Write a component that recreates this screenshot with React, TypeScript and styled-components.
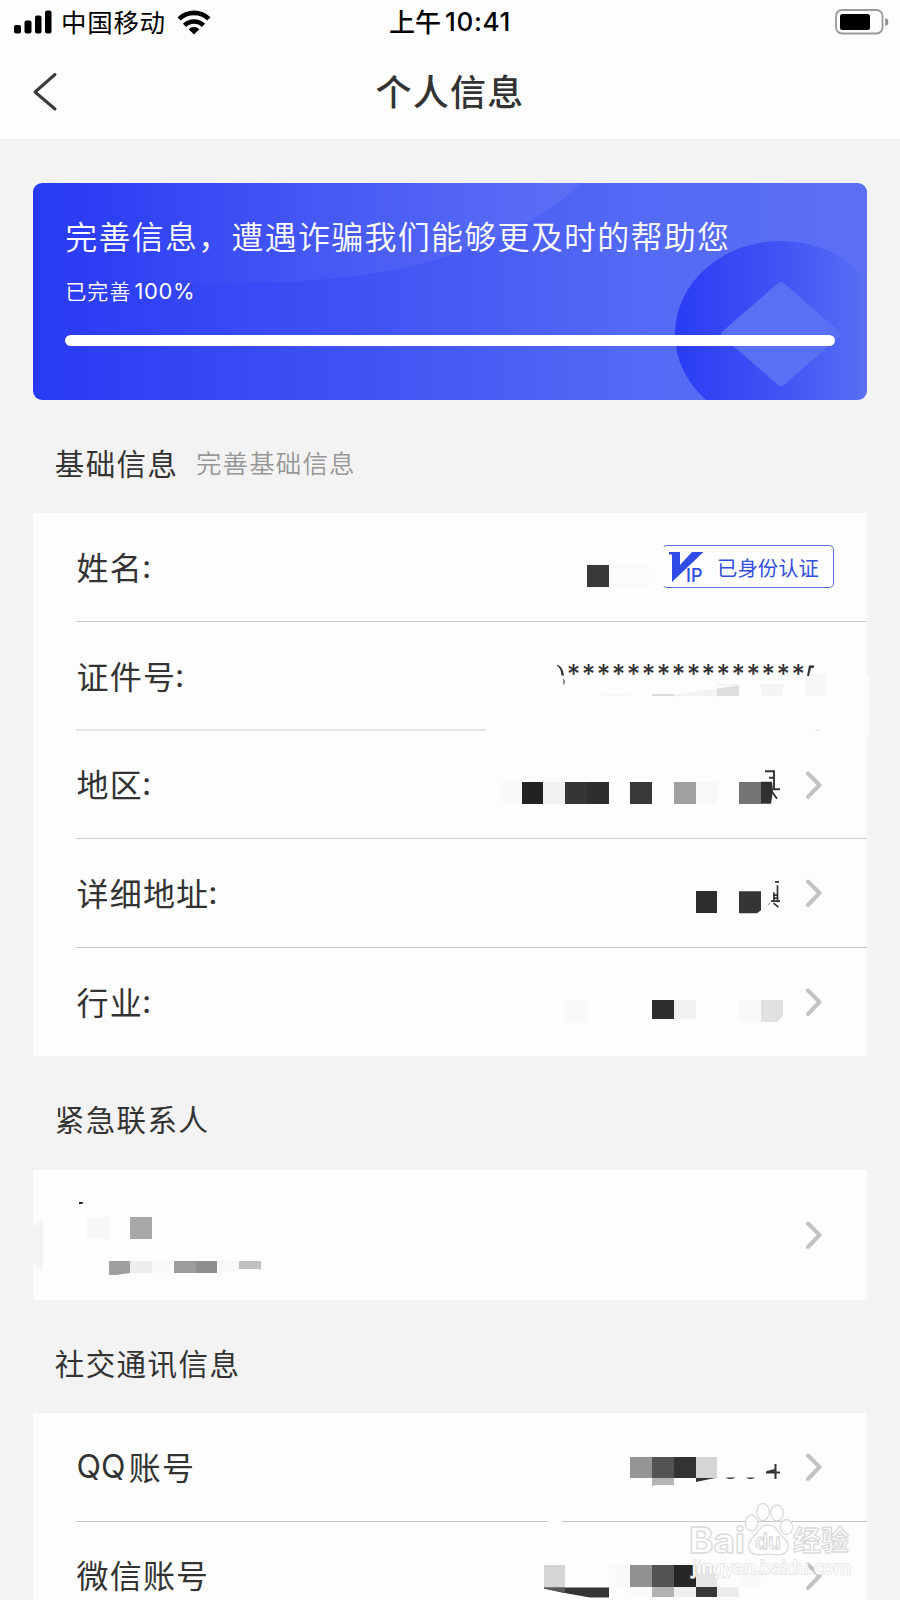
import React from "react";
import styled, { createGlobalStyle } from "styled-components";

const GlobalStyle = createGlobalStyle`
  * { box-sizing: border-box; }
  body {
    margin: 0;
    background: #f3f3f3;
    font-family: "Noto Sans CJK SC", "Noto Sans", sans-serif;
    color: #333;
  }
`;

const Screen = styled.div`
  position: relative;
  width: 900px;
  height: 1600px;
  overflow: hidden;
  background: #f3f3f3;
`;

const Header = styled.header`
  height: 139px;
  background: #fdfdfd;
`;

const StatusBar = styled.div`
  display: grid;
  grid-template-columns: 1fr auto 1fr;
  align-items: center;
  height: 46px;
  padding: 0 11px 0 14px;
  color: #000;
`;

const Carrier = styled.div`
  display: flex;
  align-items: center;
  font-size: 25.5px;
  line-height: 44px;
  letter-spacing: 0.7px;
  & > span { margin: -4px 11px 0 9px; }
  & > svg:last-child { margin-top: -3px; }
  & > svg:first-child { margin-top: -2px; }
`;

const Clock = styled.div`
  display: flex;
  align-items: center;
  margin: -4px 0 0 -3px;
  font-size: 26px;
  font-weight: 500;
  line-height: 44px;
`;

const Digits = styled.span<{ $size: number; $weight?: number; $gap?: number; $track?: number; $drop?: number }>`
  font-family: Inter, sans-serif;
  font-size: ${(p) => p.$size}px;
  font-weight: ${(p) => p.$weight ?? 400};
  margin-left: ${(p) => p.$gap ?? 0}px;
  padding-top: ${(p) => p.$drop ?? 0}px;
  letter-spacing: ${(p) => p.$track ?? 0}px;
`;

const Battery = styled.svg`
  justify-self: end;
  margin-top: -3px;
`;

const NavBar = styled.div`
  display: grid;
  grid-template-columns: 60px 1fr 60px;
  align-items: center;
  height: 92px;
`;

const BackIcon = styled.svg`
  margin-left: 30px;
`;

const Title = styled.h1`
  margin: -4px 0 0;
  text-align: center;
  font-size: 36px;
  font-weight: 500;
  line-height: 52px;
  letter-spacing: 1.2px;
`;

const Main = styled.main`
  padding: 44px 33px 0 32.7px;
`;

const Banner = styled.section`
  position: relative;
  height: 217px;
  padding: 29px 32px 0;
  border-radius: 9px;
  overflow: hidden;
  background: linear-gradient(90deg, #293af5 0%, #4456f3 45%, #5469f5 72%, #5b70f4 100%);
  color: #fff;
`;

const BannerArt = styled.svg`
  position: absolute;
  inset: 0;
`;

const BannerTitle = styled.h2`
  position: relative;
  margin: 0 0 0 0.5px;
  font-size: 32px;
  font-weight: 350;
  line-height: 46px;
  letter-spacing: 1.25px;
  white-space: nowrap;
`;

const BannerStatus = styled.div`
  position: relative;
  display: flex;
  align-items: center;
  height: 32px;
  margin: 16px 0 0 0.5px;
  font-size: 21px;
  font-weight: 350;
  letter-spacing: 1.1px;
`;

const Track = styled.div`
  position: relative;
  height: 11px;
  margin-top: 28.5px;
  border-radius: 6px;
  background: rgba(255, 255, 255, 0.3);
  overflow: hidden;
`;

const Fill = styled.div`
  height: 100%;
  border-radius: 6px;
  background: #fff;
`;

const Heading = styled.div<{ $height: number; $shift?: number }>`
  display: flex;
  align-items: center;
  height: ${(p) => p.$height}px;
  padding: ${(p) => p.$shift ?? 0}px 0 0 22px;
  font-size: 29.5px;
  letter-spacing: 1.45px;
  white-space: nowrap;
`;

const Hint = styled.span`
  margin-left: 17.5px;
  font-size: 25.5px;
  font-weight: 350;
  letter-spacing: 1.1px;
  color: #979797;
`;

const Card = styled.section`
  background: #fdfdfd;
`;

const Line = styled.div<{ $height?: number; $rule?: string }>`
  display: flex;
  align-items: center;
  height: ${(p) => p.$height ?? 108.7}px;
  margin-left: 43.3px;
  padding-right: 45px;
  box-shadow: ${(p) => (p.$rule ? `inset 0 -1px ${p.$rule}` : "none")};
`;

const Label = styled.span`
  display: flex;
  align-items: center;
  margin: -3px 0 0 0.5px;
  font-size: 32px;
  line-height: 46px;
  letter-spacing: 1.2px;
  white-space: nowrap;
  & > i { margin: 2px 0 0 -1px; font-style: normal; font-family: Inter, sans-serif; }
`;

const Value = styled.div`
  display: grid;
  align-items: center;
  justify-items: end;
  height: 100%;
  margin-left: auto;
  & > * { grid-area: 1 / 1; }
`;

const Mosaic = styled.svg`
  display: block;
  overflow: visible;
  align-self: start;
`;

const Stars = styled.span`
  margin: -5px 15.5px 0 0;
  font-family: Inter, sans-serif;
  font-size: 26px;
  font-weight: 500;
  line-height: 32px;
  letter-spacing: 1.45px;
`;

const Verified = styled.div`
  display: flex;
  align-items: center;
  gap: 13.5px;
  width: 172.5px;
  height: 43px;
  margin: -1px -12px 0 12px;
  padding-left: 6px;
  border: 1.4px solid #5870d8;
  border-left-color: transparent;
  border-radius: 5px;
  color: #3350dd;
  font-size: 20.4px;
  white-space: nowrap;
  & > svg { overflow: visible; }
  & > span { margin-top: 1px; }
`;

const Watermark = styled.svg`
  position: absolute;
  left: 685px;
  top: 1498px;
`;

type Tile = [x: number, y: number, w: number, h: number, color: string];

/* A redacted value; its tiles share one coordinate space with the screen. */
function Redacted({
  top, left = 480, width = 325, height = 108, tiles, children,
}: {
  top: number; left?: number; width?: number; height?: number; tiles: Tile[]; children?: React.ReactNode;
}) {
  return (
    <Mosaic width={width} height={height} viewBox={`${left} ${top} ${width} ${height}`}>
      {tiles.map(([x, y, w, h, c], i) => (
        <rect key={i} x={x} y={y} width={w} height={h} fill={c} shapeRendering="crispEdges" />
      ))}
      {children}
    </Mosaic>
  );
}

const Chevron = () => (
  <svg width="17" height="30" viewBox="0 0 17 30" fill="none">
    <path d="M3 3.500l11.500 11.500L3 27" stroke="#c3c3c3" strokeWidth="4" strokeLinecap="round" strokeLinejoin="round" />
  </svg>
);

function VipIcon() {
  return (
    <svg width="35" height="34" viewBox="0 0 35 34">
      <path d="M0 2h11v13L23 2h11.500L3 32V4.500H0z" fill="#304ce6" />
      <text x="17" y="31.500" fontFamily="Inter, sans-serif" fontWeight="500" fontSize="18" fill="#304ce6">IP</text>
    </svg>
  );
}

export default function App() {
  return (
    <Screen>
      <GlobalStyle />
      <Header>
        <StatusBar>
          <Carrier>
            <svg width="38" height="24" viewBox="0 0 38 24">
              <rect x="0" y="15" width="7" height="8.5" rx="2" />
              <rect x="10.5" y="10.5" width="7" height="13" rx="2" />
              <rect x="21" y="5.5" width="6.5" height="18" rx="2" />
              <rect x="31" y="0.5" width="6.5" height="23" rx="2" />
            </svg>
            <span>中国移动</span>
            <svg width="34" height="26" viewBox="0 0 34 26" fill="none" stroke="#000" strokeWidth="4.6">
              <path d="M2.1 9.900a21.500 21.500 0 0 1 29.800 0" />
              <path d="M7.500 16.400a13.500 13.500 0 0 1 19 0" />
              <path d="M17 25.500l-5.300-5.300a7.700 7.700 0 0 1 10.600 0z" fill="#000" stroke="none" />
            </svg>
          </Carrier>
          <Clock>
            上午<Digits $size={26} $weight={540} $gap={4} $track={0.7} $drop={2}>10:41</Digits>
          </Clock>
          <Battery width="54" height="26" viewBox="0 0 54 26">
            <rect x="1" y="1" width="46.5" height="23.5" rx="6" fill="none" stroke="#9b9b9b" strokeWidth="1.8" />
            <rect x="5" y="5" width="30" height="16" rx="2.5" />
            <path d="M50.3 9q3 .7 3 4t-3 4z" fill="#8b8b8b" />
          </Battery>
        </StatusBar>
        <NavBar>
          <BackIcon width="30" height="40" viewBox="0 0 30 40" fill="none">
            <path d="M25 2.500L5 20l20 17" stroke="#3b3b3b" strokeWidth="3" strokeLinecap="round" strokeLinejoin="round" />
          </BackIcon>
          <Title>个人信息</Title>
        </NavBar>
      </Header>

      <Main>
        <Banner>
          <BannerArt width="835" height="217" viewBox="0 0 835 217">
            <defs>
              <linearGradient id="arc" x1="0" x2="1">
                <stop offset="0.15" stopColor="#6c80f8" stopOpacity="0" />
                <stop offset="1" stopColor="#6c80f8" stopOpacity="0.4" />
              </linearGradient>
              <linearGradient id="disc" x1="0" x2="1">
                <stop offset="0" stopColor="#2a3cf3" />
                <stop offset="0.5" stopColor="#4154f4" />
                <stop offset="0.93" stopColor="#5a70f4" />
              </linearGradient>
            </defs>
            <path d="M0 0h549C470 70 360 100 200 100H0z" fill="url(#arc)" />
            <ellipse cx="748" cy="151" rx="106" ry="93" fill="url(#disc)" />
            <path d="M744 101q4-4 8 0l54 47q4 3 0 6l-54 47q-4 4-8 0l-54-47q-4-3 0-6z" fill="#5a70f4" />
          </BannerArt>
          <BannerTitle>完善信息，遭遇诈骗我们能够更及时的帮助您</BannerTitle>
          <BannerStatus>
            已完善<Digits $size={22} $weight={380} $gap={3} $track={0.6} $drop={2}>100%</Digits>
          </BannerStatus>
          <Track><Fill style={{ width: "100%" }} /></Track>
        </Banner>

        <Heading $height={113} $shift={10}>基础信息<Hint>完善基础信息</Hint></Heading>
        <Card>
          <Line $rule="#c9c9c9">
            <Label>姓名<i>:</i></Label>
            <Value>
              <Redacted top={513} width={342} tiles={[[587, 565, 22, 22, "#383838"], [609, 565, 42, 22, "#fbfbfb"]]} />
              <Verified>
                <VipIcon />
                <span>已身份认证</span>
              </Verified>
            </Value>
          </Line>
          <Line>
            <Label>证件号<i>:</i></Label>
            <Value>
              <Stars>****************</Stars>
              <Redacted
                top={621.6}
                width={342}
                tiles={[
                  [717, 684, 22, 12, "#dedede"], [695, 688, 22, 8, "#f3f3f3"], [652, 693.5, 22, 2.5, "#dcdcdc"],
                  [602, 694, 27, 2, "#f8f8f8"], [761, 684, 22, 12, "#f5f5f5"], [805, 674, 21, 22, "#f7f7f7"],
                ]}
              >
                <path d="M674 696v-2l43-6v8z" fill="#f3f3f3" />
                <path d="M695 684h44v1l-22 3-22 3z" fill="#fdfdfd" />
                <path d="M864 673l5 2v60l-5 2z" fill="#fdfdfd" />
                <path d="M557 664q6 2 7 11h-2.500q-.5-7-4.500-10zM563.500 678q2.500 3 0 7zM809 665h5.500l-1 2.500h-2.500l-2 8h-2z" fill="#333" />
                <path d="M76 729.700h410" stroke="#dcdcdc" strokeWidth="1.500" />
                <path d="M815 729.500h4" stroke="#ddd" />
              </Redacted>
            </Value>
          </Line>
          <Line $rule="#d0d0d0">
            <Label>地区<i>:</i></Label>
            <Value>
              <Redacted
                top={730.2}
                tiles={[
                  [500, 782, 22, 22, "#fafafa"], [522, 782, 21, 22, "#222222"], [543, 782, 22, 22, "#f1f1f1"],
                  [565, 782, 22, 22, "#353535"], [587, 782, 22, 22, "#2e2e2e"], [630, 782, 22, 22, "#383838"],
                  [674, 782, 22, 22, "#a0a0a0"], [696, 782, 21, 22, "#f8f8f8"], [739, 782, 22, 22, "#747474"],
                ]}
              >
                <path d="M761 782h11l1 9-2 13h-10z" fill="#303030" />
                <path d="M765 771.500h9v19M769 778h5M773 789.500h7M772 792l5 7" fill="none" stroke="#333" strokeWidth="1.900" />
              </Redacted>
            </Value>
            <Chevron />
          </Line>
          <Line $rule="#c4c4c4">
            <Label>详细地址<i>:</i></Label>
            <Value>
              <Redacted top={838.8} tiles={[[696, 891, 21, 22, "#2c2c2c"]]}>
                <path d="M739 891h22v19l-4 3h-18z" fill="#353535" />
                <path d="M775 881.700h4M777.500 885v17M774 892v9M771 901h9M773.500 903l5 4M773 895h4M773 898h4" fill="none" stroke="#333" strokeWidth="1.700" />
                <path d="M768 905l2-3" stroke="#999" />
              </Redacted>
            </Value>
            <Chevron />
          </Line>
          <Line>
            <Label>行业<i>:</i></Label>
            <Value>
              <Redacted
                top={947.9}
                tiles={[
                  [565, 1000, 22, 22, "#f9f9f9"], [652, 1000, 22, 19, "#2e2e2e"],
                  [674, 1000, 22, 19, "#f2f2f2"], [739, 1000, 22, 22, "#f9f9f9"],
                ]}
              >
                <path d="M761 1000h22v16l-6 6h-16z" fill="#e1e1e1" />
              </Redacted>
            </Value>
            <Chevron />
          </Line>
        </Card>

        <Heading $height={113.5} $shift={10}>紧急联系人</Heading>
        <Card>
          <Line $height={130}>
            <Redacted
              top={1170}
              left={76}
              width={200}
              height={130}
              tiles={[
                [87, 1217, 22, 22, "#f7f7f7"], [130, 1217, 22, 22, "#a8a8a8"], [130, 1261, 22, 12, "#eeeeee"],
                [152, 1261, 22, 12, "#fafafa"], [174, 1261, 22, 12, "#9c9c9c"], [196, 1261, 21, 12, "#8f8f8f"],
                [217, 1261, 22, 11, "#f8f8f8"],
              ]}
            >
              <path d="M109 1261h21v12l-14 2h-7z" fill="#9f9f9f" />
              <path d="M79 1204v-2h4.500l-1.500 2z" fill="#222" />
              <path d="M239 1261h22v9l-3-1h-19z" fill="#c0c0c0" />
              <path d="M32 1228l11-10v54l-11-10z" fill="#f4f4f4" />
            </Redacted>
            <Value />
            <Chevron />
          </Line>
        </Card>

        <Heading $height={113} $shift={11}>社交通讯信息</Heading>
        <Card>
          <Line $rule="#c4c4c4">
            <Label><Digits $size={32} $track={0.1} $drop={2}>QQ</Digits><span>&#8202;账号</span></Label>
            <Value>
              <Redacted
                top={1413}
                tiles={[
                  [630, 1457, 22, 21, "#959595"], [652, 1457, 22, 21, "#535353"], [674, 1457, 22, 21, "#333333"],
                  [696, 1457, 21, 21, "#d5d5d5"],
                ]}
              >
                <path d="M652 1478h22v7h-18l-4 1z" fill="#b5b5b5" />
                <path d="M696 1478h20l-6 1-14 3zM725.500 1477.500h10q-5 3-10 0zM746 1477.500h9q-4.500 3-9 0z" fill="#333" />
                <path d="M766 1472.500h14M775.500 1464v15M767 1472l8-2" fill="none" stroke="#333" strokeWidth="2" />
                <path d="M548 1521.200h14" stroke="#fdfdfd" strokeWidth="4" />
              </Redacted>
            </Value>
            <Chevron />
          </Line>
          <Line>
            <Label>微信账号</Label>
            <Value>
              <Redacted
                top={1521.6}
                tiles={[
                  [544, 1565, 21, 22, "#d5d5d5"], [609, 1565, 21, 22, "#fafafa"], [630, 1565, 22, 22, "#919191"],
                  [652, 1565, 22, 22, "#535353"], [674, 1565, 22, 22, "#272727"], [696, 1565, 21, 22, "#e5e5e5"],
                  [739, 1565, 22, 22, "#fafafa"], [630, 1587, 22, 10, "#fafafa"], [652, 1587, 22, 10, "#b2b2b2"],
                  [674, 1587, 22, 10, "#eeeeee"], [696, 1587, 21, 10, "#383838"], [717, 1587, 22, 10, "#ececec"],
                ]}
              >
                <path d="M544 1587h65v10h-19l-28-5-18-4z" fill="#343434" />
                <path d="M544 1587h21v5.500l-21-4.500z" fill="#595959" />
              </Redacted>
            </Value>
            <Chevron />
          </Line>
        </Card>
      </Main>

      <Watermark width="175" height="90" viewBox="685 1498 175 90">
        <g fill="#fff" fillOpacity="0.85" stroke="#dadada" strokeWidth="1.300" strokeLinejoin="round">
          <text x="689" y="1553" fontSize="35" fontFamily="Inter, sans-serif" fontWeight="700" textLength="56" lengthAdjust="spacingAndGlyphs">Bai</text>
          <ellipse cx="751.500" cy="1523" rx="6.200" ry="8" />
          <ellipse cx="763" cy="1512" rx="6.200" ry="8.500" />
          <ellipse cx="777" cy="1513" rx="6.200" ry="8" />
          <ellipse cx="786.500" cy="1527" rx="6" ry="7.500" />
          <path d="M768 1525c-8 0-9 7-14 11-5 5-6 8-5 12 2 8 9 7 19 6 10 1 18 2 20-6 1-5-1-8-6-12-5-5-6-11-14-11z" />
          <text x="755" y="1549" fontSize="22" fontWeight="600" fontFamily="Inter, sans-serif" textLength="26" lengthAdjust="spacingAndGlyphs">du</text>
          <text x="793" y="1551" fontSize="28" fontWeight="700" fontFamily="'Noto Sans CJK SC', sans-serif" textLength="56">经验</text>
        </g>
        <text
          x="692" y="1574" fontSize="18.500" fontFamily="'Noto Sans', sans-serif" fill="#fff" stroke="#e0e0e0"
          strokeWidth="1.500" paintOrder="stroke" textLength="159"
        >jingyan.baidu.com</text>
      </Watermark>
    </Screen>
  );
}
